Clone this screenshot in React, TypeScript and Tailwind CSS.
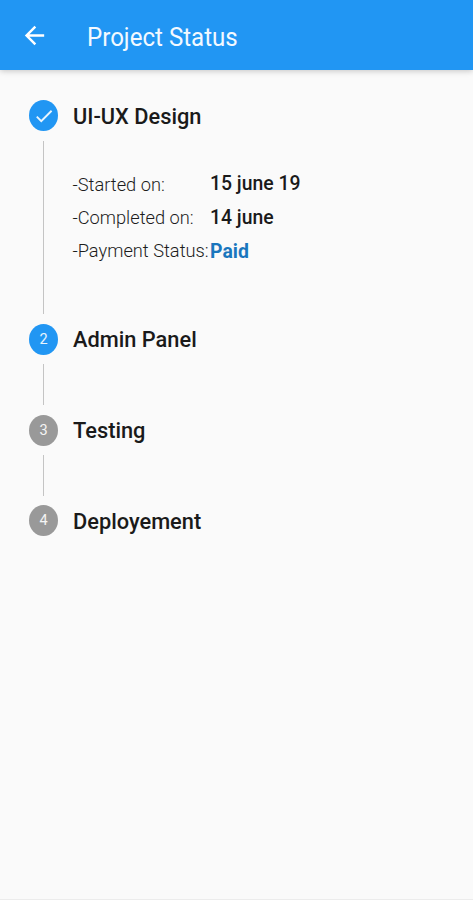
import type { ReactNode } from "react";

function Badge({ active, children }: { active?: boolean; children: ReactNode }) {
  return (
    <div
      className={`flex h-[31px] w-[29px] shrink-0 items-center justify-center rounded-[50%] text-[14.5px] text-white/90 ${
        active ? "bg-[#2196f3]" : "bg-[#999999]"
      }`}
    >
      {children}
    </div>
  );
}

function Step({ active, badge, title, nudge = "pt-px" }: { active?: boolean; badge: ReactNode; title: string; nudge?: string }) {
  return (
    <div className="flex h-[31px] items-center">
      <Badge active={active}>{badge}</Badge>
      <h2 className={`ml-[15px] text-[21.8px] leading-[30px] font-medium whitespace-nowrap text-[#1a1a1a] ${nudge}`}>{title}</h2>
    </div>
  );
}

function Detail({ label, value, tone, nudge = "" }: { label: string; value: string; tone: string; nudge?: string }) {
  return (
    <div className="flex h-[33.5px] items-center whitespace-nowrap">
      <span className={`w-[137.5px] shrink-0 text-[18.25px] font-light text-[#1c1c1c] ${nudge}`}>{label}</span>
      <span className={`text-[19.4px] ${tone}`}>{value}</span>
    </div>
  );
}

export default function App() {
  return (
    <div className="flex h-[900px] w-full flex-col overflow-hidden border-b border-[#ececec] bg-[#fafafa] font-['Roboto',sans-serif]">
      <header className="flex h-[70px] shrink-0 items-center bg-[#2196f3] text-white shadow-[0_1px_6px_rgba(0,0,0,0.22)]">
        <svg className="ml-[20px] h-[29px] w-[29px]" viewBox="0 0 24 24" fill="currentColor">
          <path d="M20 11H7.83l5.59-5.59L12 4l-8 8 8 8 1.41-1.41L7.83 13H20v-2z" />
        </svg>
        <h1 className="ml-[38px] scale-y-[1.06] pt-[4px] text-[24.1px] leading-[30px] font-normal whitespace-nowrap text-[#f3f9ff]">
          Project Status
        </h1>
      </header>
      <main className="flex flex-col pt-[30px] pl-[29px]">
        <Step
          active
          title="UI-UX Design"
          nudge="pt-[3px]"
          badge={
            <svg className="h-[22px] w-[22px]" viewBox="0 0 24 24" fill="currentColor">
              <path d="M9 16.17 4.83 12l-1.42 1.41L9 19 21 7l-1.41-1.41z" />
            </svg>
          }
        />
        <div className="my-[10px] ml-[14px] h-[173px] border-l border-[#c4c4c4] pt-[26px] pl-[28.5px]">
          <Detail label="-Started on:" value="15 june 19" tone="font-medium text-[#1a1a1a]" nudge="pt-[2px]" />
          <Detail label="-Completed on:" value="14 june" tone="font-medium text-[#1a1a1a]" />
          <Detail label="-Payment Status:" value="Paid" tone="pt-[2px] font-bold text-[#1976bd]" />
        </div>
        <Step active badge="2" title="Admin Panel" />
        <div className="mt-[9px] mb-[10px] ml-[14px] h-[41px] border-l border-[#c4c4c4]" />
        <Step badge="3" title="Testing" />
        <div className="mt-[9px] mb-[9px] ml-[14px] h-[41px] border-l border-[#c4c4c4]" />
        <Step badge="4" title="Deployement" nudge="pt-[3px]" />
      </main>
    </div>
  );
}
